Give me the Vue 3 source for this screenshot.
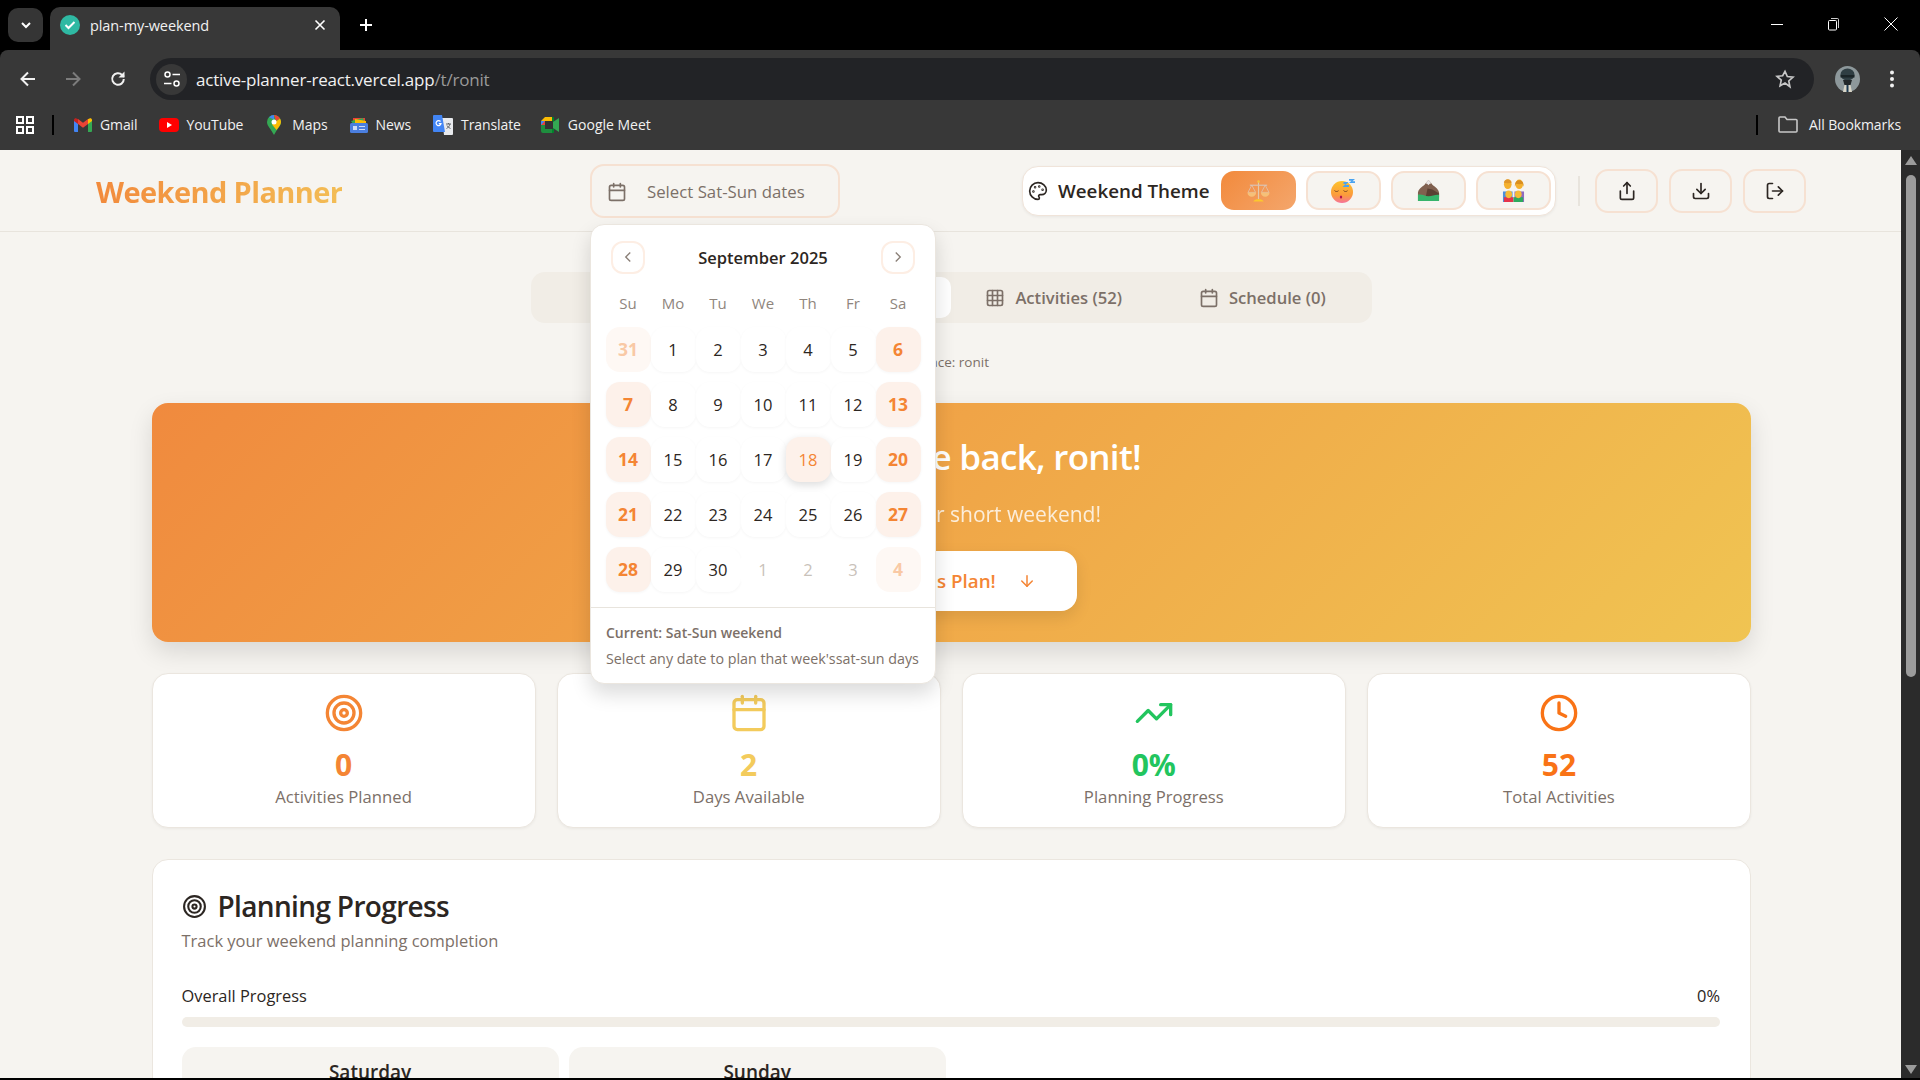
<script setup>
const icons = {
  calendar: '<path d="M8 2v4"/><path d="M16 2v4"/><rect x="3" y="4" width="18" height="18" rx="2"/><path d="M3 10h18"/>',
  target: '<circle cx="12" cy="12" r="10"/><circle cx="12" cy="12" r="6"/><circle cx="12" cy="12" r="2"/>',
  trend: '<polyline points="22 7 13.5 15.5 8.5 10.5 2 17"/><polyline points="16 7 22 7 22 13"/>',
  clock: '<circle cx="12" cy="12" r="10"/><polyline points="12 6 12 12 16 14"/>',
  table: '<rect x="3" y="3" width="18" height="18" rx="2"/><path d="M3 9h18"/><path d="M3 15h18"/><path d="M9 3v18"/><path d="M15 3v18"/>',
  share: '<path d="M4 12v8a2 2 0 0 0 2 2h12a2 2 0 0 0 2-2v-8"/><polyline points="16 6 12 2 8 6"/><line x1="12" y1="2" x2="12" y2="15"/>',
  download: '<path d="M21 15v4a2 2 0 0 1-2 2H5a2 2 0 0 1-2-2v-4"/><polyline points="7 10 12 15 17 10"/><line x1="12" y1="15" x2="12" y2="3"/>',
  logout: '<path d="M9 21H5a2 2 0 0 1-2-2V5a2 2 0 0 1 2-2h4"/><polyline points="16 17 21 12 16 7"/><line x1="21" y1="12" x2="9" y2="12"/>'
}

const weekDays = ['Su', 'Mo', 'Tu', 'We', 'Th', 'Fr', 'Sa']

// w = weekend, m = other month, t = today
const days = [
  ['31', 'w m'], ['1'], ['2'], ['3'], ['4'], ['5'], ['6', 'w'],
  ['7', 'w'], ['8'], ['9'], ['10'], ['11'], ['12'], ['13', 'w'],
  ['14', 'w'], ['15'], ['16'], ['17'], ['18', 't'], ['19'], ['20', 'w'],
  ['21', 'w'], ['22'], ['23'], ['24'], ['25'], ['26'], ['27', 'w'],
  ['28', 'w'], ['29'], ['30'], ['1', 'm'], ['2', 'm'], ['3', 'm'], ['4', 'w m']
]

const stats = [
  { icon: 'target', value: '0', label: 'Activities Planned', color: '#f48534' },
  { icon: 'calendar', value: '2', label: 'Days Available', color: '#f3cb5c' },
  { icon: 'trend', value: '0%', label: 'Planning Progress', color: '#22c55e' },
  { icon: 'clock', value: '52', label: 'Total Activities', color: '#f97316' }
]
</script>

<template>
  <div class="screen">
    <!-- browser chrome -->
    <div class="tabstrip">
      <div class="tab-search">
        <svg width="14" height="14" viewBox="0 0 14 14"><path d="M3 5l4 4 4-4" fill="none" stroke="#fff" stroke-width="2"/></svg>
      </div>
      <div class="tab">
        <svg class="favicon" width="20" height="20" viewBox="0 0 20 20"><circle cx="10" cy="10" r="10" fill="#2fb9a3"/><path d="M5.5 10l3 3 6-6" fill="none" stroke="#fff" stroke-width="2"/></svg>
        <span class="tab-title">plan-my-weekend</span>
        <svg width="12" height="12" viewBox="0 0 12 12"><path d="M1.5 1.5l9 9M10.5 1.5l-9 9" stroke="#fff" stroke-width="1.6"/></svg>
      </div>
      <svg class="new-tab" width="14" height="14" viewBox="0 0 14 14"><path d="M7 1v12M1 7h12" stroke="#fff" stroke-width="2"/></svg>
      <div class="win-controls">
        <svg width="14" height="14" viewBox="0 0 14 14"><path d="M1 7.5h12" stroke="#fff"/></svg>
        <svg class="restore" width="14" height="14" viewBox="0 0 14 14"><rect x="2.5" y="3.5" width="8" height="9.5" rx="1" fill="none" stroke="#fff"/><path d="M5 1.5h6.5a1 1 0 0 1 1 1V11" fill="none" stroke="#fff" stroke-width=".8"/></svg>
        <svg width="14" height="14" viewBox="0 0 14 14"><path d="M.5.5l13 13M13.5.5l-13 13" stroke="#fff"/></svg>
      </div>
    </div>

    <div class="toolbar">
      <div class="nav-icons">
        <svg width="20" height="20" viewBox="0 0 20 20"><path d="M17 10H4M10 3.500L3.500 10l6.500 6.500" fill="none" stroke="#f1f1f1" stroke-width="2"/></svg>
        <svg width="20" height="20" viewBox="0 0 20 20"><path d="M3 10h13M10 3.500l6.500 6.500-6.500 6.500" fill="none" stroke="#7c7c7c" stroke-width="2"/></svg>
        <svg width="20" height="20" viewBox="0 0 20 20"><path d="M15.800 10a5.800 5.800 0 1 1-1.700-4.100L16 7.800" fill="none" stroke="#f1f1f1" stroke-width="2"/><path d="M16.500 2.500v6h-6z" fill="#f1f1f1"/></svg>
      </div>
      <div class="url-bar">
        <div class="site-icon">
          <svg width="18" height="18" viewBox="0 0 18 18" fill="none" stroke="#fff" stroke-width="1.500"><circle cx="4.500" cy="4.500" r="2.500"/><path d="M9.500 4.500H17M1 13.500h7.500"/><circle cx="13.500" cy="13.500" r="2.500"/></svg>
        </div>
        <span class="url">active-planner-react.vercel.app<span class="url-path">/t/ronit</span></span>
        <svg class="star" width="20" height="20" viewBox="0 0 24 24"><path d="M12 2.800l2.800 6.300 6.800.7-5.100 4.600 1.400 6.800L12 16.800l-5.900 3.400 1.400-6.800-5.100-4.600 6.800-.7z" fill="none" stroke="#c7c7c7" stroke-width="2"/></svg>
      </div>
      <svg class="avatar" width="25" height="26" viewBox="0 0 25 26">
        <ellipse cx="12.500" cy="13" rx="12.500" ry="13" fill="#8d989b"/>
        <ellipse cx="12.500" cy="8.500" rx="7" ry="6" fill="#2f3e43"/>
        <path d="M5.500 9h14v2.500h-14z" fill="#1b2528"/>
        <path d="M8 14h9l-1.500 5h-6z" fill="#22282a"/>
        <path d="M8 26l1.500-7h6l1.500 7z" fill="#d9d6c8"/>
        <path d="M11.500 19h2v7h-2z" fill="#1d3a52"/>
      </svg>
      <svg class="kebab" width="6" height="20" viewBox="0 0 6 20" fill="#f1f1f1"><circle cx="3" cy="3.500" r="2"/><circle cx="3" cy="10" r="2"/><circle cx="3" cy="16.500" r="2"/></svg>
    </div>

    <div class="bookmarks">
      <svg class="apps" width="18" height="18" viewBox="0 0 18 18" fill="none" stroke="#fff" stroke-width="2"><rect x="1" y="1" width="6" height="6"/><rect x="11" y="1" width="6" height="6"/><rect x="1" y="11" width="6" height="6"/><rect x="11" y="11" width="6" height="6"/></svg>
      <i class="bm-sep"></i>
      <div class="bm gmail">
        <svg width="18" height="14" viewBox="0 0 18 14"><path d="M0 2v11a1 1 0 0 0 1 1h3V5z" fill="#4285f4"/><path d="M18 2v11a1 1 0 0 1-1 1h-3V5z" fill="#34a853"/><path d="M14 1v5l4-3V2c0-1.500-1.700-2.200-2.800-1.300z" fill="#fbbc04"/><path d="M4 1v5l5 3.700L14 6V1L9 4.800z" fill="#ea4335"/><path d="M0 2v1l4 3V1L2.800.7C1.700-.2 0 .5 0 2z" fill="#c5221f"/></svg>
        Gmail
      </div>
      <div class="bm youtube">
        <svg width="20" height="14" viewBox="0 0 20 14"><rect width="20" height="14" rx="4" fill="#f00"/><path d="M8 4l5 3-5 3z" fill="#fff"/></svg>
        YouTube
      </div>
      <div class="bm maps">
        <svg width="14" height="20" viewBox="0 0 14 20"><path d="M7 0a7 7 0 0 1 7 7c0 4-4 7-7 13C4 14 0 11 0 7a7 7 0 0 1 7-7z" fill="#34a853"/><path d="M2 2.200A7 7 0 0 1 7 0v4.500z" fill="#4285f4"/><path d="M7 0a7 7 0 0 1 6 3.500L9 6z" fill="#ea4335"/><path d="M14 7c0 3-2.500 5-4.500 8L5 9.500 13 3.500a7 7 0 0 1 1 3.500z" fill="#fbbc04"/><circle cx="7" cy="7" r="2.500" fill="#fff"/></svg>
        Maps
      </div>
      <div class="bm news">
        <svg width="18" height="18" viewBox="0 0 18 18"><path d="M3 2h12v6H3z" fill="#ea4335"/><path d="M1 5l12-3 2 6H3z" fill="#34a853"/><path d="M5 3l11 2v5H5z" fill="#fbbc04"/><rect y="7" width="18" height="10" rx="1.500" fill="#4b7fe0"/><path d="M3 10h4v4H3zM9 10h6v1H9zM9 13h6v1H9z" fill="#cfdcf7"/></svg>
        News
      </div>
      <div class="bm translate">
        <svg width="20" height="20" viewBox="0 0 20 20"><path d="M9 3h10a1 1 0 0 1 1 1v15a1 1 0 0 1-1 1h-8z" fill="#e8eaed"/><path d="M1 0h8l3 17H1a1 1 0 0 1-1-1V1a1 1 0 0 1 1-1z" fill="#4285f4"/><path d="M13 9h5M15.500 8v1M17 9c-.5 2-2 4-3.500 4.500M14 10.500c.7 1.300 2 2.500 3.500 3" stroke="#5f6368" fill="none"/><path d="M7.500 6.500a2.500 2.500 0 1 0 .5 2.200H5.800" fill="none" stroke="#fff" stroke-width="1.200"/></svg>
        Translate
      </div>
      <div class="bm meet">
        <svg width="18" height="16" viewBox="0 0 18 16"><path d="M4 0h8v4H4v4H0V4z" fill="#fbbc04"/><path d="M0 8h4v4h8v4H2a2 2 0 0 1-2-2z" fill="#1e8e3e"/><path d="M0 4h4v4H0z" fill="#ea4335"/><path d="M12 0a1 1 0 0 1 1 1v14a1 1 0 0 1-1 1h-1V0z" fill="#00832d"/><path d="M12 5l6-4v14l-6-4z" fill="#34a853"/><path d="M4 4h8v8H4z" fill="#333"/><path d="M0 4h4L0 8z" fill="#4285f4"/></svg>
        Google Meet
      </div>
      <i class="bm-sep right"></i>
      <div class="bm all">
        <svg width="20" height="17" viewBox="0 0 20 17"><path d="M1 2a1 1 0 0 1 1-1h5l2 2.500h9a1 1 0 0 1 1 1V15a1 1 0 0 1-1 1H2a1 1 0 0 1-1-1z" fill="none" stroke="#c7c7c7" stroke-width="1.600"/></svg>
        All Bookmarks
      </div>
    </div>

    <!-- app -->
    <div class="viewport">
      <div class="page">
        <header class="app-header">
          <h1 class="brand"><span>Weekend Planner</span></h1>
          <div class="date-wrap">
            <button class="date-btn">
              <svg class="ico i20" viewBox="0 0 24 24" v-html="icons.calendar"></svg>
              Select Sat-Sun dates
            </button>
            <div class="calendar">
              <div class="cal-head">
                <button class="cal-nav"><svg width="18" height="18" viewBox="0 0 24 24" fill="none" stroke="#8a7f77" stroke-width="1.800"><path d="M15 18l-6-6 6-6"/></svg></button>
                <span class="cal-month">September 2025</span>
                <button class="cal-nav"><svg width="18" height="18" viewBox="0 0 24 24" fill="none" stroke="#8a7f77" stroke-width="1.800"><path d="M9 18l6-6-6-6"/></svg></button>
              </div>
              <div class="cal-weekdays">
                <span v-for="d in weekDays" :key="d">{{ d }}</span>
              </div>
              <div class="cal-grid">
                <div v-for="(d, i) in days" :key="i" class="cell" :class="d[1]">{{ d[0] }}</div>
              </div>
              <div class="cal-foot">
                <div class="foot-title">Current: Sat-Sun weekend</div>
                <div class="foot-text">Select any date to plan that week'ssat-sun days</div>
              </div>
            </div>
          </div>
          <div class="header-right">
            <div class="theme-box">
              <svg class="ico i20 dark" viewBox="0 0 24 24">
                <circle cx="13.500" cy="6.500" r=".5"/><circle cx="17.500" cy="10.500" r=".5"/><circle cx="8.500" cy="7.500" r=".5"/><circle cx="6.500" cy="12.500" r=".5"/>
                <path d="M12 2C6.500 2 2 6.500 2 12s4.500 10 10 10c.926 0 1.648-.746 1.648-1.688 0-.437-.18-.835-.437-1.125-.29-.289-.438-.652-.438-1.125a1.640 1.640 0 0 1 1.668-1.668h1.996c3.051 0 5.555-2.503 5.555-5.554C21.965 6.012 17.461 2 12 2z"/>
              </svg>
              <span class="theme-label">Weekend Theme</span>
              <button class="theme-btn active">
                <svg width="23" height="23" viewBox="0 0 24 24">
                  <path d="M12 2v19" stroke="#e6c9a8" stroke-width="1.200"/>
                  <path d="M3 6.500h18" stroke="#d8c4b6" stroke-width="1.200"/>
                  <path d="M5 6.500l-4 7.500h8zM19 6.500L15 14h8z" fill="none" stroke="#dccbc0" stroke-width=".7"/>
                  <path d="M.5 14h9a4.500 4.500 0 0 1-9 0zM14.500 14h9a4.500 4.500 0 0 1-9 0z" fill="#f6c078"/>
                  <circle cx="12" cy="2.500" r="1.300" fill="#f9c33c"/>
                  <path d="M6.500 23.500c1-2 3-2.500 5.500-2.500s4.500.5 5.500 2.500z" fill="#fcc82d"/>
                </svg>
              </button>
              <button class="theme-btn">
                <svg width="24" height="24" viewBox="0 0 24 24">
                  <defs><linearGradient id="face" x1="0" y1="0" x2="0" y2="1"><stop offset="0" stop-color="#fdc32c"/><stop offset=".65" stop-color="#fb9a3c"/><stop offset="1" stop-color="#f6729a"/></linearGradient></defs>
                  <circle cx="11" cy="13" r="11" fill="url(#face)"/>
                  <path d="M3.500 11.500c1 1.300 3 1.300 4 .2M12.500 11.500c1 1.300 3 1.300 4 .2" fill="none" stroke="#6d3a22" stroke-width=".9"/>
                  <ellipse cx="10" cy="18" rx="1.200" ry="1.500" fill="#b5134f"/>
                  <path d="M12.500 3h5l-3 3h3.500v2h-6.500l3-3h-2zM18 0h6l-2.500 2.200H24V4h-6l2.500-2.200H18z" fill="#4aa3f0"/>
                </svg>
              </button>
              <button class="theme-btn">
                <svg width="23" height="23" viewBox="0 0 24 24">
                  <path d="M1 14C2 9 7 8 9 4.500L12 1l3 3.500c2 3.500 7 4.500 8 9.500v9H1z" fill="#80604f"/>
                  <path d="M9 4.500L12 1l3 3.500-2 .6-1 1.400-1.200-1.400z" fill="#e9e6e6"/>
                  <path d="M11 10l5 1 7 4v4H9z" fill="#5a3f33"/>
                  <path d="M1 16.500c4-1 7 1.500 11 1.500s7-2 11-1.500V23H1z" fill="#36b46b"/>
                </svg>
              </button>
              <button class="theme-btn">
                <svg width="23" height="23" viewBox="0 0 24 24">
                  <path d="M1 24V13h10v11z" fill="#4c8fdc"/><path d="M13 24V13h10v11z" fill="#8e6bbf"/>
                  <ellipse cx="6" cy="5.500" rx="4" ry="5" fill="#f5b12e"/>
                  <path d="M2 4c0-5 8-5 8 0-2 .5-6 .5-8 0z" fill="#e0962a"/>
                  <ellipse cx="18" cy="5.500" rx="4" ry="5" fill="#f5b12e"/>
                  <path d="M13.500 8c-1-9 10-9 9 0l-1-3c-2 .5-5 .5-7 0z" fill="#d98e1f"/>
                  <path d="M2 24v-5h10v5z" fill="#e5334b"/><path d="M12 24v-5h10v5z" fill="#2eaa5e"/>
                  <ellipse cx="7" cy="16" rx="3.500" ry="4" fill="#f7bb36"/>
                  <ellipse cx="17" cy="16" rx="3.500" ry="4" fill="#f7bb36"/>
                </svg>
              </button>
            </div>
            <i class="head-sep"></i>
            <button class="act-btn"><svg class="ico i20 dark" viewBox="0 0 24 24" v-html="icons.share"></svg></button>
            <button class="act-btn"><svg class="ico i20 dark" viewBox="0 0 24 24" v-html="icons.download"></svg></button>
            <button class="act-btn"><svg class="ico i20 dark" viewBox="0 0 24 24" v-html="icons.logout"></svg></button>
          </div>
        </header>

        <main class="content">
          <nav class="tabs">
            <div class="main-tab first">Overview</div>
            <div class="main-tab active">Planner</div>
            <div class="main-tab activities">
              <svg class="ico i20" viewBox="0 0 24 24" v-html="icons.table"></svg>
              Activities (52)
            </div>
            <div class="main-tab">
              <svg class="ico i20" viewBox="0 0 24 24" v-html="icons.calendar"></svg>
              Schedule (0)
            </div>
          </nav>

          <p class="space-note">Space: ronit</p>

          <section class="hero">
            <h2>Welcome back, ronit!</h2>
            <p>Let's plan your short weekend!</p>
            <button class="hero-btn">
              Start This Plan!
              <svg class="ico i18" viewBox="0 0 24 24"><path d="M12 5v14"/><path d="M19 12l-7 7-7-7"/></svg>
            </button>
          </section>

          <section class="stats">
            <div v-for="s in stats" :key="s.label" class="stat-card" :style="{ color: s.color }">
              <svg class="ico i40" viewBox="0 0 24 24" v-html="icons[s.icon]"></svg>
              <div class="stat-value">{{ s.value }}</div>
              <div class="stat-label">{{ s.label }}</div>
            </div>
          </section>

          <section class="progress-card">
            <h3><svg class="ico i25" viewBox="0 0 24 24" v-html="icons.target"></svg>Planning Progress</h3>
            <p class="progress-sub">Track your weekend planning completion</p>
            <div class="progress-row"><span>Overall Progress</span><span>0%</span></div>
            <div class="progress-bar"></div>
            <div class="day-grid">
              <div class="day-box">Saturday</div>
              <div class="day-box">Sunday</div>
            </div>
          </section>
        </main>
      </div>

      <div class="scrollbar">
        <i class="arrow up"></i>
        <i class="thumb"></i>
        <i class="arrow down"></i>
      </div>
    </div>
    <div class="screen-edge"></div>
  </div>
</template>

<style>
html, body {
  margin: 0;
  background: #000;
}
</style>

<style scoped>
.screen {
  width: 1920px;
  height: 1080px;
  display: flex;
  flex-direction: column;
  overflow: hidden;
  font-family: "Open Sans", "Noto Sans", sans-serif;
  color: #2c2622;
}

/* chrome */
.tabstrip {
  height: 50px;
  flex-shrink: 0;
  background: #000;
  display: flex;
  align-items: flex-start;
}
.tab-search {
  width: 35px;
  height: 34px;
  margin: 8px 7px 0 8px;
  border-radius: 10px;
  background: #353535;
  display: flex;
  align-items: center;
  justify-content: center;
}
.tab {
  width: 290px;
  height: 43px;
  margin-top: 7px;
  box-sizing: border-box;
  padding: 0 14px 7px 10px;
  background: #383838;
  border-radius: 10px 10px 0 0;
  display: flex;
  align-items: center;
  color: #f1f1f1;
  font-size: 14.500px;
}
.tab-title {
  margin-left: 10px;
  flex: 1;
  letter-spacing: -0.1px;
}
.new-tab {
  margin: 18px 0 0 19px;
}
.win-controls {
  margin-left: auto;
  display: flex;
  gap: 42px;
  padding: 17px 22px 0 0;
}
.restore {
  margin-right: 2px;
}
.toolbar {
  height: 50px;
  flex-shrink: 0;
  background: #383838;
  border-radius: 8px 8px 0 0;
  display: flex;
  align-items: flex-end;
}
.nav-icons {
  display: flex;
  gap: 25px;
  padding: 0 0 11px 18px;
}
.url-bar {
  width: 1664px;
  height: 42px;
  margin-left: 22px;
  border-radius: 21px;
  background: #222326;
  display: flex;
  align-items: center;
}
.site-icon {
  width: 31px;
  height: 31px;
  margin-left: 6px;
  border-radius: 50%;
  background: #383838;
  display: flex;
  align-items: center;
  justify-content: center;
}
.url {
  margin-left: 9px;
  font-size: 17px;
  color: #f1f1f1;
  letter-spacing: -0.2px;
}
.url-path {
  color: #9a9a9a;
}
.star {
  margin-left: auto;
  margin-right: 19px;
}
.avatar {
  margin: 0 0 8px 21px;
}
.kebab {
  margin: 0 0 11px 29px;
}
.bookmarks {
  height: 50px;
  flex-shrink: 0;
  box-sizing: border-box;
  padding-bottom: 1px;
  background: #383838;
  display: flex;
  align-items: center;
  color: #f1f1f1;
  font-size: 14px;
}
.apps {
  margin-left: 16px;
}
.bm-sep {
  width: 2px;
  height: 20px;
  margin-left: 18px;
  background: #000;
}
.bm-sep.right {
  margin-left: auto;
}
.bm {
  display: flex;
  align-items: center;
  gap: 8px;
  letter-spacing: -0.1px;
}
.gmail { margin-left: 20px; }
.youtube { margin-left: 21px; }
.maps { margin-left: 24px; gap: 11px; }
.news { margin-left: 22px; }
.translate { margin-left: 22px; }
.meet { margin-left: 20px; gap: 9px; letter-spacing: 0; }
.all { margin: 0 19px 0 20px; gap: 11px; }

/* app */
.viewport {
  flex: 1;
  min-height: 0;
  display: flex;
}
.page {
  flex: 1;
  min-width: 0;
  background: #f6f4f0;
  overflow: hidden;
}
.scrollbar {
  width: 19px;
  flex-shrink: 0;
  background: #2b2b2b;
  display: flex;
  flex-direction: column;
  align-items: center;
  box-sizing: border-box;
  padding: 6px 0 4px;
}
.thumb {
  width: 10px;
  height: 502px;
  margin-top: 10px;
  border-radius: 5px;
  background: #9b9b9b;
}
.arrow {
  width: 0;
  height: 0;
  border-left: 6px solid transparent;
  border-right: 6px solid transparent;
}
.arrow.up {
  border-bottom: 9px solid #9b9b9b;
}
.arrow.down {
  margin-top: auto;
  border-top: 9px solid #9b9b9b;
}
.screen-edge {
  height: 2px;
  flex-shrink: 0;
  background: #000;
}

.ico {
  fill: none;
  stroke: currentColor;
  stroke-width: 2;
  stroke-linecap: round;
  stroke-linejoin: round;
  flex-shrink: 0;
}
.ico.dark { color: #2c2622; }
.i18 { width: 18px; height: 18px; }
.i20 { width: 20px; height: 20px; }
.i25 { width: 25px; height: 25px; }
.i40 { width: 40px; height: 40px; }

button {
  font-family: inherit;
  cursor: pointer;
}

.app-header {
  height: 81px;
  border-bottom: 1px solid #e8e4dd;
  padding: 0 95px 0 96px;
  display: flex;
  align-items: center;
}
.brand {
  width: 494px;
  margin: 0;
  padding-top: 2px;
  flex-shrink: 0;
  font-size: 29px;
  font-weight: 700;
  letter-spacing: -0.6px;
}
.brand span {
  background: linear-gradient(90deg, #f28a3c, #f3bd55);
  -webkit-background-clip: text;
  background-clip: text;
  color: transparent;
}
.date-wrap {
  position: relative;
}
.date-btn {
  width: 250px;
  height: 54px;
  box-sizing: border-box;
  padding: 2px 0 0 15px;
  border: 2px solid #f6e1d2;
  border-radius: 14px;
  background: #f6f4f0;
  display: flex;
  align-items: center;
  gap: 20px;
  font-size: 16.800px;
  color: #7c7068;
}
.calendar {
  position: absolute;
  top: 60px;
  left: 0;
  z-index: 5;
  width: 346px;
  box-sizing: border-box;
  background: #fff;
  border: 1px solid #ebe6df;
  border-radius: 14px;
  box-shadow: 0 10px 20px rgba(0, 0, 0, 0.14);
}
.cal-head {
  display: flex;
  align-items: center;
  justify-content: space-between;
  padding: 16px 20px 0;
}
.cal-nav {
  width: 34px;
  height: 33px;
  padding: 0;
  border: 2px solid #fdeee4;
  border-radius: 12px;
  background: #fff;
  display: flex;
  align-items: center;
  justify-content: center;
}
.cal-month {
  font-size: 16.500px;
  font-weight: 600;
}
.cal-weekdays,
.cal-grid {
  display: grid;
  grid-template-columns: repeat(7, 45px);
  justify-content: center;
}
.cal-weekdays {
  margin-top: 17px;
  font-size: 15px;
  line-height: 24px;
  text-align: center;
  color: #8f857d;
}
.cal-grid {
  margin-top: 12px;
  row-gap: 10px;
}
.cell {
  height: 45px;
  border-radius: 14px;
  background: #fff;
  box-shadow: 0 1px 3px rgba(0, 0, 0, 0.04);
  display: flex;
  align-items: center;
  justify-content: center;
  font-size: 16.500px;
  color: #2c2622;
}
.cell.w {
  background: #fdf1ea;
  color: #f48534;
  font-size: 17.500px;
  font-weight: 700;
}
.cell.t {
  background: #fdf1ea;
  color: #f48534;
  box-shadow: 0 3px 8px rgba(0, 0, 0, 0.14);
}
.cell.m {
  color: #c9c2ba;
  box-shadow: none;
}
.cell.w.m {
  background: #fef8f4;
  color: #f9c9a5;
}
.cal-foot {
  margin-top: 15px;
  padding: 14px 15px 13px;
  border-top: 1px solid #e8e4dd;
}
.foot-title {
  font-size: 14px;
  font-weight: 600;
  line-height: 22px;
  color: #7c7068;
}
.foot-text {
  margin-top: 4px;
  font-size: 14.300px;
  line-height: 22px;
  color: #7c7068;
  white-space: nowrap;
}
.header-right {
  margin-left: auto;
  display: flex;
  align-items: center;
}
.theme-box {
  width: 534px;
  height: 50px;
  box-sizing: border-box;
  padding: 0 4px 0 5px;
  border: 1px solid #f0e4da;
  border-radius: 16px;
  background: #fff;
  box-shadow: 0 1px 3px rgba(0, 0, 0, 0.06);
  display: flex;
  align-items: center;
  gap: 10px;
}
.theme-label {
  margin-right: 1px;
  font-size: 18.800px;
  font-weight: 600;
  white-space: nowrap;
}
.theme-btn {
  width: 75px;
  height: 39px;
  padding: 0;
  border: 2px solid #f6e1d2;
  border-radius: 13px;
  background: #f6f4f0;
  display: flex;
  align-items: center;
  justify-content: center;
}
.theme-btn.active {
  border: none;
  background: linear-gradient(135deg, #f28a3c, #f4a66c);
}
.head-sep {
  width: 2px;
  height: 30px;
  margin: 0 15px 0 22px;
  background: #e8e4dd;
}
.act-btn {
  width: 63px;
  height: 44px;
  margin-right: 11px;
  padding: 0;
  border: 2px solid #f6e1d2;
  border-radius: 13px;
  background: #f6f4f0;
  display: flex;
  align-items: center;
  justify-content: center;
}
.act-btn:last-child {
  margin-right: 0;
}

.content {
  padding: 40px 150px 0 151.5px;
}
.tabs {
  width: 841px;
  height: 51px;
  margin: 0 auto;
  box-sizing: border-box;
  padding: 5px 9px 5px 6px;
  border-radius: 14px;
  background: #f1ede6;
  display: flex;
}
.main-tab {
  padding: 0 37px;
  display: flex;
  align-items: center;
  gap: 10px;
  font-size: 16.600px;
  font-weight: 600;
  color: #7c7068;
  white-space: nowrap;
}
.main-tab.activities {
  padding: 0 40px 0 34px;
}
.main-tab.first {
  flex: 1;
  justify-content: center;
}
.main-tab.active {
  width: 200px;
  box-sizing: border-box;
  justify-content: center;
  background: #fff;
  border-radius: 10px;
}
.space-note {
  height: 22px;
  margin: 28px 0 0;
  padding-left: 1px;
  line-height: 22px;
  text-align: center;
  font-size: 13.500px;
  color: #7c7068;
}
.hero {
  height: 239px;
  margin-top: 30px;
  box-sizing: border-box;
  padding-top: 26px;
  border-radius: 16px;
  background: linear-gradient(135deg, #f08a3e, #f0c452);
  box-shadow: 0 10px 25px rgba(0, 0, 0, 0.12);
  display: flex;
  flex-direction: column;
  align-items: center;
  color: #fff;
}
.hero h2 {
  margin: 0;
  padding-left: 39px;
  font-size: 35px;
  line-height: 56px;
  font-weight: 600;
  letter-spacing: -0.7px;
}
.hero p {
  margin: 13px 0 0;
  font-size: 21px;
  line-height: 32px;
  opacity: 0.8;
}
.hero-btn {
  width: 251px;
  height: 60px;
  margin-top: 21px;
  padding: 0 41px 0 0;
  border: none;
  border-radius: 16px;
  background: #fff;
  box-shadow: 0 6px 16px rgba(0, 0, 0, 0.1);
  display: flex;
  align-items: center;
  justify-content: flex-end;
  gap: 22px;
  font-size: 18.800px;
  font-weight: 600;
  color: #f48534;
  white-space: nowrap;
}
.stats {
  margin-top: 31px;
  display: grid;
  grid-template-columns: repeat(4, 1fr);
  gap: 21px;
}
.stat-card {
  height: 155px;
  box-sizing: border-box;
  padding-top: 19px;
  border: 1px solid #ebe6df;
  border-radius: 16px;
  background: #fff;
  box-shadow: 0 1px 3px rgba(0, 0, 0, 0.05);
  display: flex;
  flex-direction: column;
  align-items: center;
}
.stat-value {
  margin-top: 12px;
  font-size: 30px;
  line-height: 40px;
  font-weight: 700;
}
.stat-label {
  margin-top: -1px;
  font-size: 16.700px;
  line-height: 26px;
  color: #7c7068;
}
.progress-card {
  height: 400px;
  margin-top: 31px;
  box-sizing: border-box;
  padding: 26px 30px 0 29px;
  border: 1px solid #ebe6df;
  border-radius: 16px;
  background: #fff;
}
.progress-card h3 {
  margin: 0;
  display: flex;
  align-items: center;
  gap: 11px;
  font-size: 28px;
  line-height: 40px;
  font-weight: 600;
  letter-spacing: -0.65px;
}
.progress-sub {
  margin: 2px 0 0;
  font-size: 16.500px;
  line-height: 26px;
  color: #7c7068;
}
.progress-row {
  margin-top: 29px;
  display: flex;
  justify-content: space-between;
  font-size: 16.400px;
  line-height: 26px;
}
.progress-bar {
  height: 10px;
  margin-top: 8px;
  border-radius: 5px;
  background: #f1ede6;
}
.day-grid {
  margin-top: 20px;
  display: grid;
  grid-template-columns: repeat(4, 1fr);
  gap: 10px;
}
.day-box {
  height: 120px;
  box-sizing: border-box;
  padding-top: 11px;
  border-radius: 14px;
  background: #f6f4f0;
  text-align: center;
  font-size: 19px;
  font-weight: 600;
  line-height: 28px;
}
</style>
